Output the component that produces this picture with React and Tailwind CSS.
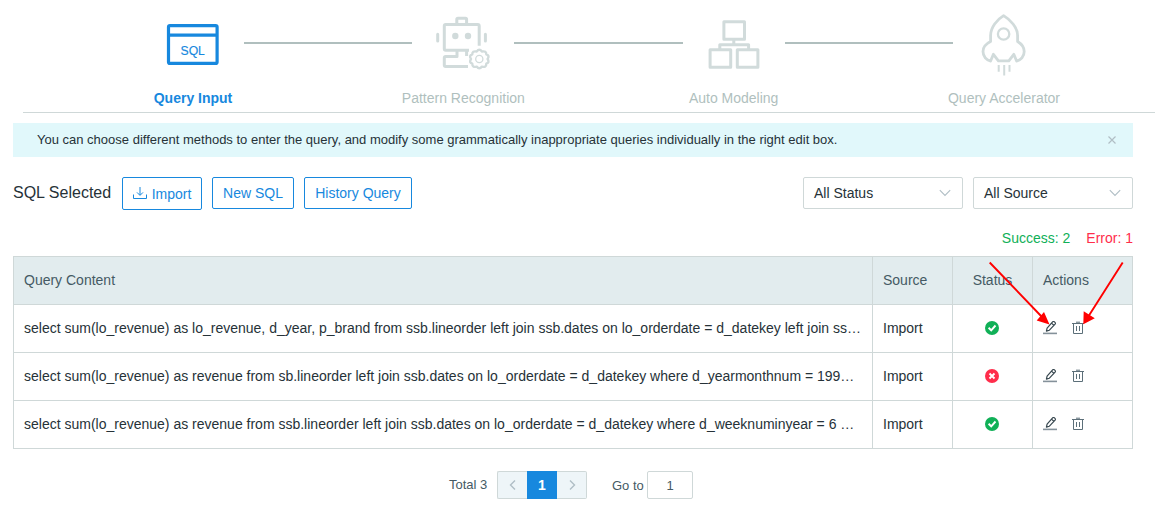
import React from "react";

function SqlIcon() {
  return (
    <svg width="102" height="86" viewBox="142 0 102 86" className="shrink-0" fill="none" stroke="#1788de" strokeWidth="3.2">
      <rect x="168.5" y="25.6" width="48.6" height="37.8" rx="1.5" />
      <path d="M168 35.2h49.5" />
      <text x="192.7" y="54.8" textAnchor="middle" fill="#1788de" stroke="#1788de" strokeWidth="0.15" fontSize="12.2" fontFamily="Liberation Sans, Arial, sans-serif">
        SQL
      </text>
    </svg>
  );
}

function RobotIcon() {
  return (
    <svg width="102" height="86" viewBox="412 0 102 86" className="shrink-0" fill="none" stroke="#d1dbdb" strokeWidth="3" strokeLinejoin="round">
      <path d="M479.2 45.7V26a1.4 1.4 0 0 0-1.4-1.4H445.7a1.4 1.4 0 0 0-1.4 1.4V48.8a1.4 1.4 0 0 0 1.4 1.4H469" />
      <path d="M456.8 24v-4.6a1.2 1.2 0 0 1 1.2-1.2h7.4a1.2 1.2 0 0 1 1.2 1.2V24" />
      <path d="M437.7 34.3v6.6M485.4 34.3v6.6" strokeLinecap="round" />
      <circle cx="455.3" cy="36" r="3.2" fill="#d1dbdb" stroke="none" />
      <circle cx="468" cy="36" r="3.2" fill="#d1dbdb" stroke="none" />
      <path d="M457 50v6.4h-11.3a1.4 1.4 0 0 0-1.4 1.4v7.3a1.4 1.4 0 0 0 1.4 1.4H468M466.6 50v6" />
      <path
        strokeWidth="2.4"
        d="M476.7 51.5Q479.3 48 481.9 51.5Q486.4 50.6 486.3 54.3Q490 55.5 487.6 59Q490 62.5 486.3 63.7Q486.4 67.8 481.9 66.6Q479.3 70 476.7 66.6Q472.2 67.8 472.3 63.7Q468.6 62.5 471 59Q468.6 55.5 472.3 54.3Q472.2 50.6 476.7 51.5Z"
      />
      <circle cx="479.3" cy="59" r="3.6" strokeWidth="1.3" />
    </svg>
  );
}

function ModelIcon() {
  return (
    <svg width="102" height="86" viewBox="682.7 0 102 86" className="shrink-0" fill="none" stroke="#d1dbdb" strokeWidth="3" strokeLinejoin="round">
      <rect x="723.6" y="21.7" width="20.6" height="17.6" />
      <rect x="709.8" y="49.7" width="20.6" height="17.6" />
      <rect x="737" y="49.7" width="20.6" height="17.6" />
      <path d="M733.5 40v4.6M719.5 49v-4.3h28.8V49" />
    </svg>
  );
}

function RocketIcon() {
  return (
    <svg width="102" height="86" viewBox="953 0 102 86" className="shrink-0" fill="none" stroke="#d1dbdb" strokeWidth="2.8" strokeLinejoin="round">
      <path d="M1003.6 15.6C997 19.5 990.6 27.5 990.6 35.5V41.5C985.5 44 983 47.8 983 51.5C983 56.5 986.5 60.3 990.6 61L993.4 54.3L998.4 60.8H1008.8L1013.8 54.3L1016.6 61C1020.7 60.3 1024.2 56.5 1024.2 51.5C1024.2 47.8 1021.7 44 1017.6 41.5V35.5C1017.6 27.5 1010.2 19.5 1003.6 15.6Z" />
      <circle cx="1003.6" cy="34" r="5.7" strokeWidth="2.3" />
      <path strokeWidth="2" d="M998.7 65v6.7M1004.2 65v10.5M1009.5 65v6.7" />
    </svg>
  );
}

const steps = [
  { label: "Query Input", Icon: SqlIcon, active: true },
  { label: "Pattern Recognition", Icon: RobotIcon },
  { label: "Auto Modeling", Icon: ModelIcon },
  { label: "Query Accelerator", Icon: RocketIcon },
];

const rows = [
  {
    sql: "select sum(lo_revenue) as lo_revenue, d_year, p_brand from ssb.lineorder left join ssb.dates on lo_orderdate = d_datekey left join ss…",
    ok: true,
  },
  {
    sql: "select sum(lo_revenue) as revenue from sb.lineorder left join ssb.dates on lo_orderdate = d_datekey where d_yearmonthnum = 199…",
    ok: false,
  },
  {
    sql: "select sum(lo_revenue) as revenue from ssb.lineorder left join ssb.dates on lo_orderdate = d_datekey where d_weeknuminyear = 6 …",
    ok: true,
  },
];

function StatusIcon({ ok }) {
  return (
    <svg width="15" height="14" viewBox="0 0 15 14" fill="none" stroke="#fff">
      <circle cx="7" cy="7" r="7" fill={ok ? "#10b057" : "#ff2d4b"} stroke="none" />
      {ok ? (
        <path d="M3.6 6.8L6.2 9.3L10.5 4.5" strokeWidth="1.9" />
      ) : (
        <path d="M4.5 4.5L9.5 9.5M9.5 4.5L4.5 9.5" strokeWidth="1.9" />
      )}
    </svg>
  );
}

function EditIcon() {
  return (
    <svg width="14" height="14" viewBox="0 0 14 14" fill="none" stroke="#37474f">
      <path d="M0 12.4h14" strokeWidth="1.6" stroke="#84919a" />
      <path d="M3.4 10.1L4.1 7.2L9.6 0.9Q10.4 0.1 11.3 0.8L12 1.4Q12.8 2.2 12.1 3.1L6.4 9.2Z M8.6 2.2L10.8 4.4" strokeWidth="1.2" strokeLinejoin="round" />
    </svg>
  );
}

function TrashIcon() {
  return (
    <svg width="12" height="14" viewBox="0 0 12 14" fill="none" stroke="#5c6f79">
      <path d="M0 2.5h12M4 1.2h4M1.5 2.5v10h9v-10" />
      <path d="M4.5 5v5M7.5 5v5" />
    </svg>
  );
}

function Select({ label }) {
  return (
    <div className="flex h-8 w-40 items-center justify-between rounded-xs border border-[#cfd8d8] pr-[11px] pl-2.5">
      <span>{label}</span>
      <svg width="12" height="8" viewBox="0 0 12 8" fill="none" stroke="#b0bec5" strokeWidth="1.1">
        <path d="M0.8 1.2L6 6.4L11.2 1.2" />
      </svg>
    </div>
  );
}

function Chevron({ d }) {
  return (
    <svg width="8" height="12" viewBox="0 0 8 12" fill="none" stroke="#b0bec5" strokeWidth="1.4">
      <path d={d} />
    </svg>
  );
}

const button = "flex items-center justify-center rounded-xs border border-[#1788de] text-[#1788de]";
const cell = "flex items-center border-r border-b border-[#cfd8d8] px-2.5 pb-px";

export default function App() {
  return (
    <div className="relative h-[507px] w-[1155px] overflow-hidden bg-white font-['Liberation_Sans',Arial,sans-serif] text-sm leading-5 text-[#263238]">
      <header className="ml-[23px] flex h-[113px] border-b border-[#cfd8d8] pr-[100px] pl-[119px]">
        {steps.map(({ label, Icon, active }, i) => (
          <React.Fragment key={label}>
            {i > 0 && <div className="mt-[42px] h-0.5 flex-1 bg-[#b0bfbe]" />}
            <div className="flex w-[102px] shrink-0 flex-col items-center">
              <Icon />
              <span className={active ? "mt-[2px] font-bold whitespace-nowrap text-[#1788de]" : "mt-[2px] whitespace-nowrap text-[#b0bfbe]"}>
                {label}
              </span>
            </div>
          </React.Fragment>
        ))}
      </header>

      <main className="ml-[13px] w-[1120px]">
        <div className="mt-2.5 flex h-[34px] items-center justify-between bg-[#e1f8fb] pr-[17px] pl-6 text-[13px]">
          <span>
            You can choose different methods to enter the query, and modify some grammatically inappropriate queries individually in the right edit box.
          </span>
          <svg width="8" height="8" viewBox="0 0 8 8" stroke="#b0bec5" strokeWidth="1.2">
            <path d="M0.5 0.5L7.5 7.5M7.5 0.5L0.5 7.5" />
          </svg>
        </div>

        <div className="mt-5 flex h-[33px] items-start">
          <span className="mt-1.5 w-[109px] text-base leading-5 whitespace-nowrap">SQL Selected</span>
          <button className={`${button} h-[33px] w-20 gap-[5px]`}>
            <svg width="14" height="13" viewBox="0 0 14 13" fill="none" stroke="#1788de">
              <path d="M0.5 7.5v4h13v-4M7 0v8M4 5.4l3 3 3-3" />
            </svg>
            <span>Import</span>
          </button>
          <button className={`${button} ml-2.5 h-8 w-[82px]`}>New SQL</button>
          <button className={`${button} ml-2.5 h-8 w-[108px]`}>History Query</button>
          <div className="ml-auto flex gap-2.5">
            <Select label="All Status" />
            <Select label="All Source" />
          </div>
        </div>

        <div className="mt-[18px] flex h-[28px] justify-end gap-4">
          <span className="text-[#10b057]">Success: 2</span>
          <span className="text-[#ff2d4b]">Error: 1</span>
        </div>

        <div className="grid auto-rows-[48px] grid-cols-[859px_80px_80px_100px] border-t border-l border-[#cfd8d8]">
          {["Query Content", "Source", "Status", "Actions"].map((h) => (
            <div key={h} className={`${cell} bg-[#e2ecee] text-[#455a64] ${h === "Status" ? "justify-center" : ""}`}>
              {h}
            </div>
          ))}
          {rows.map((r) => (
            <React.Fragment key={r.sql}>
              <div className={cell}>
                <span className="whitespace-nowrap">{r.sql}</span>
              </div>
              <div className={cell}>Import</div>
              <div className={`${cell} justify-center`}>
                <StatusIcon ok={r.ok} />
              </div>
              <div className={`${cell} gap-[15px]`}>
                <EditIcon />
                <TrashIcon />
              </div>
            </React.Fragment>
          ))}
        </div>

        <div className="mt-[22px] flex h-7 items-center pl-[436px] text-[13px] text-[#455a64]">
          <span className="w-12">Total 3</span>
          <div className="flex h-7">
            <div className="flex w-[30px] items-center justify-center rounded-l-xs border border-r-0 border-[#cfd8d8] bg-[#eef5f8]">
              <Chevron d="M6 1.5L1.5 6L6 10.5" />
            </div>
            <div className="flex w-[30px] items-center justify-center bg-[#1788de] text-sm font-bold text-white">1</div>
            <div className="flex w-[30px] items-center justify-center rounded-r-xs border border-l-0 border-[#cfd8d8] bg-[#eef5f8]">
              <Chevron d="M2 1.5L6.5 6L2 10.5" />
            </div>
          </div>
          <span className="mt-px ml-[25px] w-[35px]">Go to</span>
          <div className="flex h-7 w-[46px] items-center justify-center rounded-xs border border-[#cfd8d8] bg-white pt-px">1</div>
        </div>
      </main>

      <svg className="pointer-events-none absolute top-[255px] left-[980px]" width="155" height="80" viewBox="980 255 155 80" stroke="#f00" fill="#f00">
        <path d="M989.7 262.5L1042 317M1122.7 262.5L1088 317" strokeWidth="1.9" />
        <path d="M1049.5 324.5L1036.7 320.5L1044 312ZM1083.3 324.3L1083.7 311.3L1094.8 318.3Z" stroke="none" />
      </svg>
    </div>
  );
}
